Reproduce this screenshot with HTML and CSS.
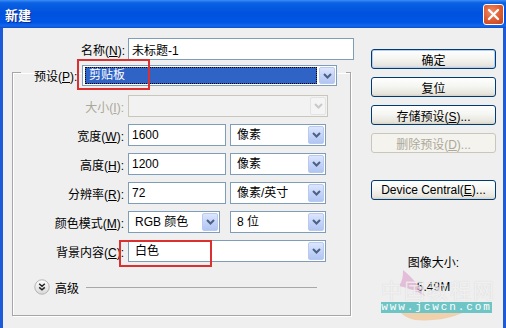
FILE: index.html
```html
<!DOCTYPE html>
<html lang="zh-CN">
<head>
  <meta charset="UTF-8" />
  <title>新建</title>
  <link rel="stylesheet" href="styles.css">
</head>
<body>

  <div class="window">
    <div class="titlebar">
      <span class="title">新建</span>
      <span class="close">
        <svg width="13" height="13" viewBox="0 0 13 13"><path d="M2 2 L11 11 M11 2 L2 11" stroke="#fff" stroke-width="2.4" stroke-linecap="round"/></svg>
      </span>
    </div>

    <div class="content">
      <div class="form">
        <div class="name-row">
          <label class="name-label">名称(<u>N</u>):</label>
          <input class="text name-input" type="text" value="未标题-1" />
        </div>

        <fieldset class="group">
          <legend>
            <div class="legend-row">
              <label class="preset-label">预设(<u>P</u>):</label>
              <div class="select preset">
                <span class="value"><span class="highlight">剪贴板</span></span>
                <span class="arrow"><svg width="9" height="6" viewBox="0 0 9 6"><path d="M1 1 L4.5 4.5 L8 1" fill="none" stroke="#4d6185" stroke-width="2"/></svg></span>
              </div>
            </div>
          </legend>

          <div class="rows">
            <div class="field-row">
              <label class="disabled">大小(<u>I</u>):</label>
              <div class="select disabled size-select">
                <span class="value"></span>
                <span class="arrow"><svg width="9" height="6" viewBox="0 0 9 6"><path d="M1 1 L4.5 4.5 L8 1" fill="none" stroke="#c9c9c9" stroke-width="2"/></svg></span>
              </div>
            </div>

            <div class="field-row">
              <label>宽度(<u>W</u>):</label>
              <input class="text num" type="text" value="1600" />
              <div class="select unit">
                <span class="value">像素</span>
                <span class="arrow"><svg width="9" height="6" viewBox="0 0 9 6"><path d="M1 1 L4.5 4.5 L8 1" fill="none" stroke="#4d6185" stroke-width="2"/></svg></span>
              </div>
            </div>

            <div class="field-row">
              <label>高度(<u>H</u>):</label>
              <input class="text num" type="text" value="1200" />
              <div class="select unit">
                <span class="value">像素</span>
                <span class="arrow"><svg width="9" height="6" viewBox="0 0 9 6"><path d="M1 1 L4.5 4.5 L8 1" fill="none" stroke="#4d6185" stroke-width="2"/></svg></span>
              </div>
            </div>

            <div class="field-row">
              <label>分辨率(<u>R</u>):</label>
              <input class="text num" type="text" value="72" />
              <div class="select unit">
                <span class="value">像素/英寸</span>
                <span class="arrow"><svg width="9" height="6" viewBox="0 0 9 6"><path d="M1 1 L4.5 4.5 L8 1" fill="none" stroke="#4d6185" stroke-width="2"/></svg></span>
              </div>
            </div>

            <div class="field-row">
              <label>颜色模式(<u>M</u>):</label>
              <div class="select mode">
                <span class="value">RGB 颜色</span>
                <span class="arrow"><svg width="9" height="6" viewBox="0 0 9 6"><path d="M1 1 L4.5 4.5 L8 1" fill="none" stroke="#4d6185" stroke-width="2"/></svg></span>
              </div>
              <div class="select unit">
                <span class="value">8 位</span>
                <span class="arrow"><svg width="9" height="6" viewBox="0 0 9 6"><path d="M1 1 L4.5 4.5 L8 1" fill="none" stroke="#4d6185" stroke-width="2"/></svg></span>
              </div>
            </div>

            <div class="field-row">
              <label>背景内容(<u>C</u>):</label>
              <div class="select background">
                <span class="value">白色</span>
                <span class="arrow"><svg width="9" height="6" viewBox="0 0 9 6"><path d="M1 1 L4.5 4.5 L8 1" fill="none" stroke="#4d6185" stroke-width="2"/></svg></span>
              </div>
            </div>
          </div>

          <div class="advanced">
            <span class="adv-icon">
              <svg width="16" height="16" viewBox="0 0 16 16">
                <defs>
                  <linearGradient id="advg" x1="0" y1="0" x2="0" y2="1">
                    <stop offset="0" stop-color="#ffffff"/>
                    <stop offset="1" stop-color="#d8d8d8"/>
                  </linearGradient>
                </defs>
                <circle cx="8" cy="8" r="7.2" fill="url(#advg)" stroke="#b4b4b4"/>
                <path d="M5.2 4.8 L8 7.2 L10.8 4.8 M5.2 8.4 L8 10.8 L10.8 8.4" fill="none" stroke="#222" stroke-width="1.5"/>
              </svg>
            </span>
            <span class="adv-text">高级</span>
            <span class="adv-line"></span>
          </div>
        </fieldset>
      </div>

      <div class="side">
        <button class="btn default">确定</button>
        <button class="btn">复位</button>
        <button class="btn">存储预设(<u>S</u>)...</button>
        <button class="btn" disabled>删除预设(<u>D</u>)...</button>
        <button class="btn device">Device Central(<u>E</u>)...</button>

        <div class="image-size">
          <div>图像大小:</div>
          <div class="size-value">5.49M</div>
        </div>
      </div>
    </div>

    <!-- red marks drawn over the screenshot -->
    <div class="mark mark-preset"></div>
    <div class="mark mark-background"></div>

    <div class="watermark">
      <svg class="swoosh" width="110" height="56" viewBox="0 0 110 56">
        <path d="M22 4 C30 10 38 20 44 30 C36 26 28 22 18 20 C22 14 22 9 22 4 Z" fill="#d98ec4" opacity="0.5"/>
        <path d="M14 40 C40 50 70 50 96 36 C84 50 60 56 34 54 C24 52 18 46 14 40 Z" fill="#f2b36a" opacity="0.5"/>
      </svg>
      <div class="wm-title">中国教程网</div>
      <div class="wm-url">www.jcwcn.com</div>
    </div>
  </div>

</body>
</html>
```

FILE: styles.css
```css
* {
  box-sizing: border-box;
}

body {
  margin: 0;
  font-family: "Liberation Sans", "Noto Sans CJK SC", sans-serif;
  font-size: 12px;
  color: #000;
  background: #fff;
}

u {
  text-decoration: underline;
}

.window {
  position: relative;
  width: 506px;
  height: 328px;
  background: #1c5ad8;
  display: flex;
  flex-direction: column;
  overflow: hidden;
}

.titlebar {
  height: 28px;
  flex: none;
  display: flex;
  align-items: center;
  justify-content: space-between;
  padding: 0 2px 0 5px;
  background: linear-gradient(#3d8ef7 0, #0b62e4 10%, #0052dd 45%, #0055e5 80%, #1466ea 92%, #0c4fcf 100%);
}

.title {
  color: #fff;
  font-family: "Noto Sans CJK SC", sans-serif;
  font-weight: 700;
  font-size: 13px;
  text-shadow: 1px 1px 0 #0a2a8a;
}

.close {
  width: 21px;
  height: 21px;
  border: 1px solid #fff;
  border-radius: 3px;
  background: radial-gradient(circle at 40% 35%, #f08a62 0, #dd5a30 55%, #c2401c 100%);
  display: flex;
  align-items: center;
  justify-content: center;
}

.content {
  flex: 1;
  margin: 0 3px;
  background: #efefef;
  display: flex;
  padding: 10px 0 0 9px;
}

.form {
  width: 343px;
  flex: none;
}

.name-row {
  display: flex;
  height: 22px;
  align-items: center;
}

.name-label {
  width: 113px;
  margin-right: 3px;
  text-align: right;
}

.text {
  height: 22px;
  border: 1px solid #7f9db9;
  background: #fff;
  padding: 0 3px;
  font: inherit;
  color: #000;
  outline: none;
}

.name-input {
  width: 226px;
}

.group {
  width: 339px;
  height: 251px;
  margin: 5px 0 0 0;
  padding: 0;
  border: 1px solid #a6a6a6;
  box-shadow: inset 1px 1px 0 #fff, 1px 1px 0 #fff;
}

.group legend {
  margin-left: 8px;
  padding: 0 9px 0 13px;
  height: 15px;
}

.legend-row {
  display: flex;
  align-items: center;
  height: 21px;
}

.preset-label {
  width: 48px;
}

.select {
  display: flex;
  height: 22px;
  border: 1px solid #7f9db9;
  background: #fff;
}

.select .value {
  flex: 1;
  padding-left: 6px;
  line-height: 20px;
  white-space: nowrap;
  overflow: hidden;
}

.select .arrow {
  width: 16px;
  margin: 1px;
  border: 1px solid #b9c9ef;
  border-radius: 2px;
  background: linear-gradient(#dce6fd, #c0d1f7 60%, #b2c6f3);
  display: flex;
  align-items: center;
  justify-content: center;
}

.preset {
  width: 255px;
  height: 21px;
}

.preset .value {
  padding: 1px 1px 1px 2px;
  line-height: 15px;
}

.highlight {
  display: block;
  height: 17px;
  background: #2f63c6;
  color: #fff;
  padding-left: 3px;
  line-height: 15px;
  border: 1px dotted #000;
}

.select.disabled {
  border-color: #c9c7ba;
  background: #f2f2f2;
}

.select.disabled .arrow {
  border-color: #e4e4e4;
  background: #f4f4f4;
}

.rows {
  padding-top: 15px;
}

.field-row {
  display: flex;
  align-items: center;
  height: 22px;
  margin-bottom: 7px;
}

.field-row label {
  width: 111px;
  margin-right: 4px;
  text-align: right;
  white-space: nowrap;
}

label.disabled {
  color: #aca899;
}

.size-select {
  width: 200px;
}

.num {
  width: 98px;
  margin-right: 4px;
}

.unit {
  width: 96px;
}

.mode {
  width: 92px;
  margin-right: 10px;
}

.background {
  width: 198px;
}

.advanced {
  display: flex;
  align-items: center;
  height: 16px;
  margin-top: 17px;
  padding-left: 21px;
}

.adv-icon {
  display: flex;
}

.adv-text {
  margin-left: 5px;
}

.adv-line {
  flex: 1;
  height: 1px;
  background: #a8a8a8;
  margin: 0 33px 0 7px;
}

.side {
  width: 125px;
  margin-left: 16px;
  padding-top: 11px;
  display: flex;
  flex-direction: column;
}

.btn {
  height: 20px;
  margin-bottom: 8px;
  padding: 0;
  border: 1px solid #003c74;
  border-radius: 3px;
  background: linear-gradient(#ffffff, #f4f4f0 50%, #e6e4dc 88%, #d6d0c5);
  font: inherit;
  color: #000;
}

.btn.default {
  box-shadow: inset 0 0 0 1px #b6cdf5;
}

.btn:disabled {
  border-color: #c9c7ba;
  background: #f4f3ee;
  color: #aca899;
}

.btn.device {
  margin-top: 19px;
}

.image-size {
  margin-top: 48px;
  text-align: center;
  line-height: 14px;
}

.size-value {
  margin-top: 10px;
}

.mark {
  position: absolute;
  z-index: 2;
  border: 2px solid #dc3030;
}

.mark-preset {
  left: 77px;
  top: 59px;
  width: 73px;
  height: 31px;
}

.mark-background {
  left: 119px;
  top: 240px;
  width: 93px;
  height: 27px;
}

.watermark {
  position: absolute;
  left: 381px;
  top: 266px;
  width: 112px;
  height: 60px;
  pointer-events: none;
}

.swoosh {
  position: absolute;
  left: 0;
  top: 0;
}

.wm-title {
  position: absolute;
  left: 0;
  top: 8px;
  width: 112px;
  font-family: "Noto Sans CJK SC", sans-serif;
  font-size: 21px;
  letter-spacing: 2px;
  color: rgba(255, 255, 255, 0.7);
  text-shadow: 0 0 1px rgba(150, 150, 150, 0.4);
  white-space: nowrap;
}

.wm-url {
  position: absolute;
  left: 0;
  top: 36px;
  width: 111px;
  height: 11px;
  background: #6fc4c6;
  color: #fff;
  font-family: "Liberation Mono", monospace;
  font-size: 11px;
  line-height: 11px;
  letter-spacing: 1.9px;
  text-align: center;
  white-space: nowrap;
}
```
